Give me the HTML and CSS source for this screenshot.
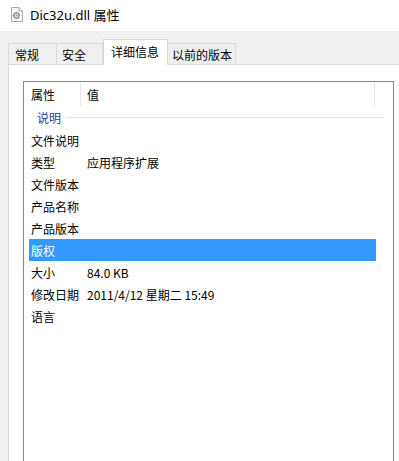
FILE: index.html
```html
<!DOCTYPE html>
<html lang="zh-CN">
<head>
<meta charset="utf-8">
<title>Dic32u.dll 属性</title>
<link rel="stylesheet" href="styles.css">
</head>
<body>
<div class="window">
  <div class="titlebar">
    <svg class="file-icon" width="12" height="15" viewBox="0 0 12 15">
      <path d="M0.5 0.5 H8 L11.5 4 V14.5 H0.5 Z" fill="#fafafa" stroke="#a8a8a8"/>
      <path d="M8 0.5 V4 H11.5" fill="#e8e8e8" stroke="#a8a8a8"/>
      <circle cx="5.5" cy="8.5" r="2.6" fill="none" stroke="#8a8a8a" stroke-width="1.4"/>
      <circle cx="5.5" cy="8.5" r="0.9" fill="#8a8a8a"/>
      <path d="M5.5 4.8 V5.9 M5.5 11.1 V12.2 M1.8 8.5 H2.9 M8.1 8.5 H9.2" stroke="#8a8a8a" stroke-width="1.2"/>
    </svg>
    <span class="title">Dic32u.dll 属性</span>
  </div>
  <div class="tabs">
    <div class="tab t1">常规</div>
    <div class="tab t2">安全</div>
    <div class="tab active">详细信息</div>
    <div class="tab t4">以前的版本</div>
  </div>
  <div class="panel">
    <div class="list">
      <div class="header">
        <div class="hcol hname">属性</div>
        <div class="hcol hvalue">值</div>
      </div>
      <div class="group"><span class="group-label">说明</span><span class="group-line"></span></div>
      <div class="row"><span class="name">文件说明</span><span class="value"></span></div>
      <div class="row"><span class="name">类型</span><span class="value">应用程序扩展</span></div>
      <div class="row"><span class="name">文件版本</span><span class="value"></span></div>
      <div class="row"><span class="name">产品名称</span><span class="value"></span></div>
      <div class="row"><span class="name">产品版本</span><span class="value"></span></div>
      <div class="row selected"><span class="name">版权</span><span class="value"></span></div>
      <div class="row"><span class="name">大小</span><span class="value">84.0 KB</span></div>
      <div class="row"><span class="name">修改日期</span><span class="value">2011/4/12 星期二 15:49</span></div>
      <div class="row"><span class="name">语言</span><span class="value"></span></div>
    </div>
  </div>
</div>
</body>
</html>
```

FILE: styles.css
```css
html, body {
  margin: 0;
  padding: 0;
}

body {
  width: 399px;
  height: 461px;
  overflow: hidden;
  background: #f0f0f0;
  font-family: "Noto Sans CJK SC", "Noto Sans", sans-serif;
  font-size: 12px;
  color: #000;
}

.window {
  display: flex;
  flex-direction: column;
  height: 461px;
}

.titlebar {
  height: 31px;
  background: #ffffff;
  display: flex;
  align-items: center;
  padding-left: 11px;
  box-sizing: border-box;
  padding-bottom: 2px;
}

.file-icon {
  display: block;
  flex: none;
}

.title {
  margin-left: 7px;
  font-family: "Noto Sans", "Noto Sans CJK SC", sans-serif;
  font-size: 13px;
  color: #000;
}

.tabs {
  display: flex;
  align-items: flex-end;
  height: 33px;
  padding-left: 8px;
  box-sizing: border-box;
  position: relative;
  z-index: 1;
}

.tab {
  height: 21px;
  box-sizing: border-box;
  border: 1px solid #d9d9d9;
  border-bottom: none;
  background: #f0f0f0;
  display: flex;
  align-items: center;
  line-height: 1;
  padding-top: 1px;
}

.t1 {
  width: 49px;
  padding-left: 6px;
}

.t2 {
  width: 46px;
  padding-left: 5px;
  border-left: none;
}

.active {
  width: 65px;
  height: 26px;
  margin-bottom: -1px;
  padding-left: 7px;
  padding-bottom: 3px;
  background: #ffffff;
  border-color: #d9d9d9;
}

.t4 {
  width: 68px;
  padding-left: 4px;
  border-left: none;
}

.panel {
  flex: 1;
  min-height: 0;
  margin-left: 8px;
  background: #ffffff;
  border-top: 1px solid #d9d9d9;
  border-left: 1px solid #d9d9d9;
  padding: 16px 5px 0 14px;
  overflow: hidden;
}

.list {
  border: 1px solid #828790;
  border-bottom: none;
  height: 420px;
  box-sizing: border-box;
}

.header {
  display: flex;
  height: 24px;
}

.hcol {
  display: flex;
  align-items: center;
  box-sizing: border-box;
  padding-left: 7px;
  border-right: 1px solid #e5e5e5;
}

.hname {
  width: 57px;
}

.hvalue {
  width: 294px;
  padding-left: 6px;
}

.group {
  height: 23px;
  display: flex;
  align-items: center;
  padding-left: 13px;
  padding-right: 9px;
}

.group-label {
  color: #1e3d99;
}

.group-line {
  flex: 1;
  height: 1px;
  background: #e2e2e2;
  margin-left: 5px;
}

.row {
  height: 22px;
  display: flex;
  align-items: center;
  margin-left: 5px;
  margin-right: 17px;
  padding-left: 2px;
}

.row.selected {
  background: #3399ff;
  color: #ffffff;
}

.name {
  width: 56px;
  flex: none;
}

.value {
  white-space: nowrap;
}
```
